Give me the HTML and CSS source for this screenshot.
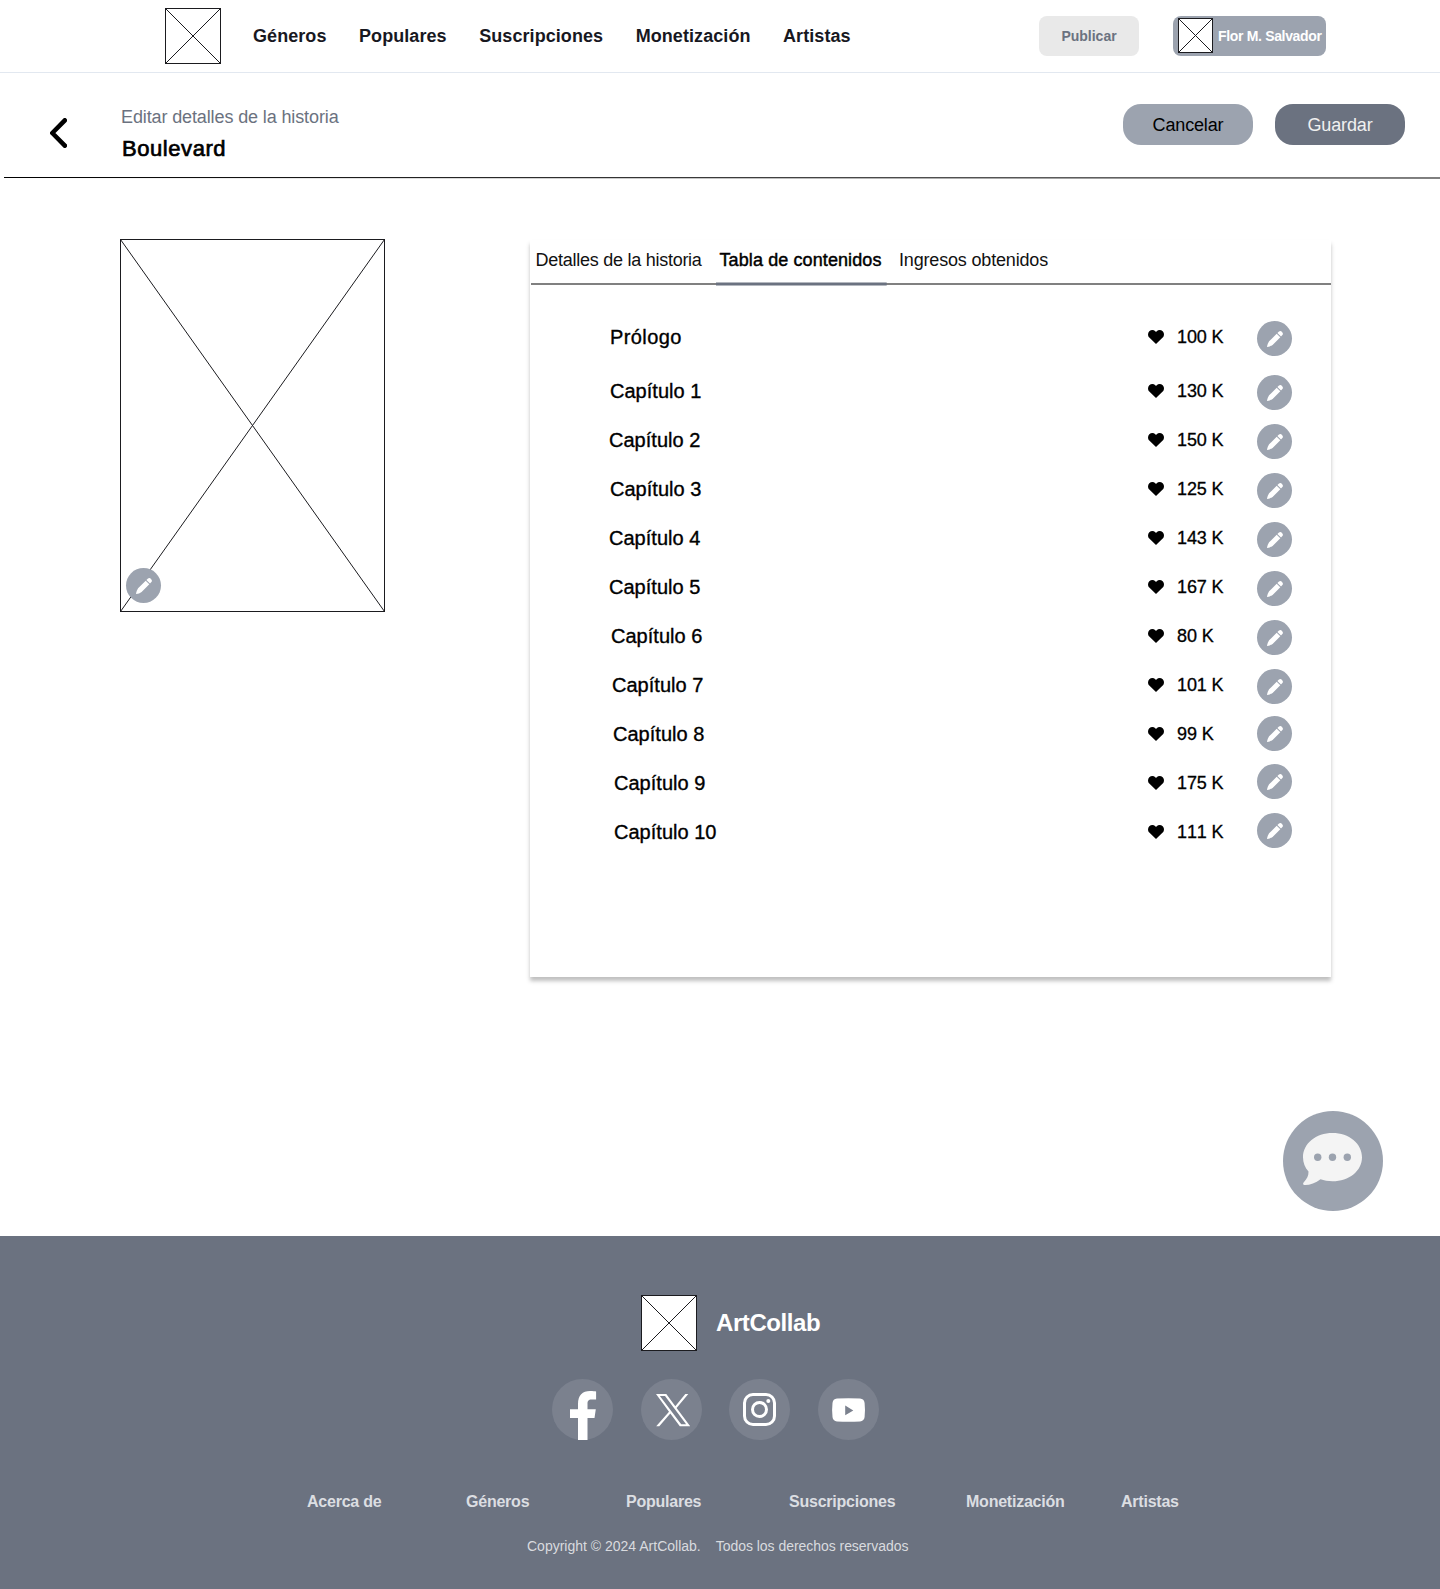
FILE: index.html
```html
<!DOCTYPE html>
<html lang="es">
<head>
<meta charset="utf-8">
<title>ArtCollab</title>
<link rel="stylesheet" href="styles.css">
</head>
<body>
<svg class="defs" width="0" height="0" aria-hidden="true">
  <symbol id="pencil" viewBox="0 0 16 16"><path d="M9.7 2.700 13.300 6.300 5.6 13.900C4 15 2 15.800.5 16 .1 16 0 15.800 0 15.500.4 13.800 1 12 2.100 10.300ZM10.400 2 12 .6C13-.200 14.100-.100 15 .9 16.100 2 16.200 3.100 15.400 4L14 5.600Z"/></symbol>
  <symbol id="heart" viewBox="0 0 16 14"><path d="M8 14 1.300 7.600C-.400 5.900-.400 3 1.300 1.300 3-.300 5.700-.300 7.300 1.200L8 1.900 8.700 1.200C10.300-.300 13-.300 14.700 1.300 16.400 3 16.400 5.900 14.700 7.600Z"/></symbol>
</svg>

<header class="topbar">
  <svg class="logo" viewBox="0 0 56 56"><rect x=".5" y=".5" width="55" height="55"/><path d="M.5.5 55.500 55.500M55.500.5.5 55.500"/></svg>
  <nav class="nav"><a>Géneros</a><a>Populares</a><a>Suscripciones</a><a>Monetización</a><a>Artistas</a></nav>
  <button class="publish">Publicar</button>
  <div class="user">
    <svg class="avatar" viewBox="0 0 35 35"><rect x=".5" y=".5" width="34" height="34"/><path d="M.5.5 34.500 34.500M34.500.5.5 34.500"/></svg>
    <span>Flor M. Salvador</span>
  </div>
</header>

<section class="subhead">
  <svg class="back" viewBox="0 0 17 30"><path d="M14.800 2.300 2.300 15 14.800 27.700"/></svg>
  <div class="titles"><p class="eyebrow">Editar detalles de la historia</p><h1>Boulevard</h1></div>
  <button class="pill cancel">Cancelar</button>
  <button class="pill save">Guardar</button>
</section>
<svg class="rule" viewBox="0 0 1440 2"><path d="M4 .5 1440 1"/></svg>

<main class="main">
  <div class="cover">
    <svg class="cover-art" viewBox="0 0 265 373"><rect x=".5" y=".5" width="264" height="372"/><path d="M.5.5 264.500 372.500M264.500.5.5 372.500"/></svg>
    <button class="edit cover-edit"><svg><use href="#pencil"/></svg></button>
  </div>
  <section class="panel">
    <div class="tabs"><a class="tab t1">Detalles de la historia</a><a class="tab t2">Tabla de contenidos</a><a class="tab t3">Ingresos obtenidos</a></div>
    <svg class="tabline" viewBox="0 0 801 4"><path class="base" d="M1 2H801"/><path class="active" d="M186 2H356.700"/></svg>
    <ul class="chapters">
      <li class="first"><span class="name">Prólogo</span><svg class="heart"><use href="#heart"/></svg><span class="likes">100 K</span><button class="edit"><svg><use href="#pencil"/></svg></button></li>
      <li><span class="name">Capítulo 1</span><svg class="heart"><use href="#heart"/></svg><span class="likes">130 K</span><button class="edit"><svg><use href="#pencil"/></svg></button></li>
      <li><span class="name out">Capítulo 2</span><svg class="heart"><use href="#heart"/></svg><span class="likes">150 K</span><button class="edit"><svg><use href="#pencil"/></svg></button></li>
      <li><span class="name">Capítulo 3</span><svg class="heart"><use href="#heart"/></svg><span class="likes">125 K</span><button class="edit"><svg><use href="#pencil"/></svg></button></li>
      <li><span class="name out">Capítulo 4</span><svg class="heart"><use href="#heart"/></svg><span class="likes">143 K</span><button class="edit"><svg><use href="#pencil"/></svg></button></li>
      <li><span class="name out">Capítulo 5</span><svg class="heart"><use href="#heart"/></svg><span class="likes">167 K</span><button class="edit"><svg><use href="#pencil"/></svg></button></li>
      <li><span class="name in1">Capítulo 6</span><svg class="heart"><use href="#heart"/></svg><span class="likes">80 K</span><button class="edit"><svg><use href="#pencil"/></svg></button></li>
      <li><span class="name in2">Capítulo 7</span><svg class="heart"><use href="#heart"/></svg><span class="likes">101 K</span><button class="edit"><svg><use href="#pencil"/></svg></button></li>
      <li><span class="name in3">Capítulo 8</span><svg class="heart"><use href="#heart"/></svg><span class="likes">99 K</span><button class="edit up2"><svg><use href="#pencil"/></svg></button></li>
      <li><span class="name in4">Capítulo 9</span><svg class="heart"><use href="#heart"/></svg><span class="likes">175 K</span><button class="edit up3"><svg><use href="#pencil"/></svg></button></li>
      <li><span class="name in4">Capítulo 10</span><svg class="heart"><use href="#heart"/></svg><span class="likes">111 K</span><button class="edit up3"><svg><use href="#pencil"/></svg></button></li>
    </ul>
  </section>
</main>

<button class="chat"><svg viewBox="0 0 59 52"><path d="M29.500 0C46 0 59 10.500 59 24.200S46 48.200 29.500 48.200C25 48.200 21 47.500 17.500 46.200 12.500 50 6 52.400 1 52 0 51.500-.2 50.500.6 49.500 4 46 5.700 42.500 5.500 38.500 2 34.500 0 29.700 0 24.200 0 10.500 13 0 29.500 0Z"/><g class="dots"><circle cx="14.700" cy="24.200" r="3.700"/><circle cx="29.500" cy="24.200" r="3.700"/><circle cx="44.300" cy="24.200" r="3.700"/></g></svg></button>

<footer class="footer">
  <div class="brand">
    <svg class="logo" viewBox="0 0 56 56"><rect x=".5" y=".5" width="55" height="55"/><path d="M.5.5 55.500 55.500M55.500.5.5 55.500"/></svg>
    <span>ArtCollab</span>
  </div>
  <div class="social">
    <a><svg viewBox="0 0 61 61"><path d="M26 61V39H18V30.200H26V25C26 16.500 30.500 12.100 38 12.100 40.800 12.100 43.200 12.300 44.100 12.500V20.600H39.500C36.300 20.600 35.500 22.200 35.500 24.800V30.200H43.800L42.500 39H35.500V61Z"/></svg></a>
    <a><svg viewBox="0 0 61 61"><path fill-rule="evenodd" d="M15 15H25.300L34.300 27.200 44.300 15H47.300L35.600 28.900 49.200 47.300H38.800L29.300 34.600 18.300 47.300H15.200L28 32.800ZM18.900 17 40.200 45.300H45.100L24 17Z"/></svg></a>
    <a><svg viewBox="0 0 61 61"><g class="line"><rect x="15.500" y="15.500" width="30" height="30" rx="8.500"/><circle cx="30.500" cy="30.500" r="7"/></g><circle cx="39.300" cy="21.900" r="2"/></svg></a>
    <a><svg viewBox="0 0 61 61"><path fill-rule="evenodd" d="M19 19.600Q30.500 18.800 42 19.600 46.200 20 46.600 24 47.400 31 46.600 38 46.200 42 42 42.400 30.500 43.200 19 42.400 14.900 42 14.500 38 13.700 31 14.500 24 14.900 20 19 19.600ZM27.200 26.500V36.200L35.300 31.400Z"/></svg></a>
  </div>
  <nav class="links"><a>Acerca de</a><a>Géneros</a><a>Populares</a><a>Suscripciones</a><a>Monetización</a><a>Artistas</a></nav>
  <div class="legal"><span>Copyright © 2024 ArtCollab.</span><span class="rights">Todos los derechos reservados</span></div>
</footer>
</body>
</html>
```
FILE: styles.css
```css
* { box-sizing: border-box; }
body {
  margin: 0;
  height: 1589px;
  display: flex;
  flex-direction: column;
  position: relative;
  background: #fff;
  color: #000;
  font-family: "Liberation Sans", Arial, sans-serif;
}
button { border: 0; padding: 0; font: inherit; color: inherit; }
svg { display: block; flex: none; }
p, h1, ul { margin: 0; padding: 0; }
.defs { position: absolute; }

.logo { width: 56px; height: 56px; }
.logo, .avatar, .cover-art { fill: #fff; stroke: #1b1b1f; stroke-width: 1; }

/* Top bar */
.topbar {
  height: 73px;
  flex: none;
  display: flex;
  align-items: center;
  padding-left: 165px;
  border-bottom: 1px solid #e2e8f0;
}
.nav {
  display: flex;
  gap: 32.500px;
  width: 786px;
  margin-left: 32px;
  flex: none;
  font-weight: 700;
  font-size: 18px;
  line-height: 24px;
  letter-spacing: .07px;
  color: #18181f;
}
.publish {
  width: 100px;
  height: 40px;
  border-radius: 8px;
  background: #e9e9e9;
  color: #6b7280;
  font-size: 14px;
  font-weight: 700;
}
.user {
  width: 153px;
  height: 40px;
  margin-left: 34px;
  padding: 2px 0 0 5px;
  display: flex;
  border-radius: 8px;
  background: #9ca3af;
  color: #fff;
  font-size: 14px;
  font-weight: 700;
  line-height: 36px;
  letter-spacing: -.33px;
  white-space: nowrap;
}
.avatar { width: 35px; height: 35px; margin-right: 5px; }

/* Story heading */
.subhead {
  height: 104px;
  flex: none;
  display: flex;
  align-items: flex-start;
}
.back { width: 17px; height: 30px; margin: 45px 0 0 50px; fill: none; stroke: #000; stroke-width: 4.600; stroke-linecap: round; stroke-linejoin: round; }
.titles { width: 1002px; margin: 32px 0 0 54px; }
.eyebrow { font-size: 18px; line-height: 24px; letter-spacing: -.12px; color: #6b7280; }
h1 { margin: 6px 0 0 1px; font-size: 22px; line-height: 28px; font-weight: 400; letter-spacing: .56px; -webkit-text-stroke: .7px #000; }
.pill {
  width: 130px;
  height: 41px;
  margin-top: 31px;
  padding-top: 2px;
  border-radius: 18px;
  font-size: 18px;
  letter-spacing: -.14px;
}
.cancel { background: #9ca3af; }
.save { margin-left: 22px; background: #6b7280; color: #f0f0f0; }
.rule { width: 1440px; height: 2px; fill: none; stroke: #000; }

/* Editor */
.main { display: flex; align-items: flex-start; padding: 60px 0 0 120px; }
.cover { position: relative; width: 265px; height: 373px; }
.cover-art { width: 265px; height: 373px; }
.edit {
  display: flex;
  align-items: flex-start;
  width: 35px;
  height: 35px;
  padding: 10px 0 0 10px;
  border-radius: 50%;
  background: #9ca3af;
  fill: #fff;
}
.edit svg { width: 16px; height: 16px; }
.cover-edit { position: absolute; left: 6px; top: 329px; }
.panel {
  width: 801px;
  height: 737px;
  margin: 1px 0 0 145px;
  background: #fff;
  box-shadow: 0 4px 4px rgba(0, 0, 0, .25);
}
.tabs { display: flex; height: 42px; padding: 8px 0 0 5.500px; font-size: 18px; line-height: 24px; white-space: nowrap; color: #111; }
.t1 { width: 184px; letter-spacing: -.26px; }
.t2 { width: 179.500px; letter-spacing: .1px; -webkit-text-stroke: .45px #000; color: #000; }
.t3 { letter-spacing: -.17px; }
.tabline { width: 801px; height: 4px; fill: none; }
.base { stroke: #808080; stroke-width: 2; }
.active { stroke: #6b7280; stroke-width: 3; }
.chapters { list-style: none; padding-top: 28px; }
.chapters li {
  height: 49px;
  display: grid;
  grid-template-columns: 539px 29px 80px 35px;
  align-items: start;
  padding-left: 79px;
}
.chapters .first { height: 54px; }
.name { padding-left: 1px; margin-top: 11px; font-size: 20px; line-height: 24px; letter-spacing: .02px; -webkit-text-stroke: .35px #000; }
.first .name { letter-spacing: .4px; }
.name.out { padding-left: 0; }
.name.in1 { padding-left: 2px; }
.name.in2 { padding-left: 3px; }
.name.in3 { padding-left: 4px; }
.name.in4 { padding-left: 5px; }
.heart { width: 16px; height: 14px; margin-top: 16px; }
.likes { margin-top: 11px; font-size: 18px; line-height: 24px; letter-spacing: -.12px; font-kerning: none; -webkit-text-stroke: .3px #000; }
.chapters .edit { margin-top: 7px; }
.chapters .up2 { margin-top: 5px; }
.chapters .up3 { margin-top: 4px; }

.chat {
  position: absolute;
  left: 1283px;
  top: 1111px;
  width: 100px;
  height: 100px;
  padding: 22px 0 0 20px;
  display: flex;
  align-items: flex-start;
  border-radius: 50%;
  background: #9ca3af;
}
.chat svg { width: 59px; height: 52px; fill: #f4f4f4; overflow: visible; }
.chat .dots { fill: #9ca3af; }

/* Footer */
.footer { height: 353px; flex: none; margin-top: auto; padding-top: 59px; background: #6b7280; }
.brand { display: flex; align-items: center; padding-left: 641px; color: #fff; font-size: 24px; line-height: 28px; font-weight: 700; letter-spacing: -.42px; }
.brand span { margin-left: 19px; }
.social { display: grid; grid-template-columns: 89px 88px 89px 61px; padding: 28px 0 0 552px; }
.social a { width: 61px; height: 61px; border-radius: 50%; background: #7b818e; fill: #fff; }
.line { fill: none; stroke: #fff; stroke-width: 3; }
.links {
  display: grid;
  grid-template-columns: 159px 160px 163px 177px 155px auto;
  padding: 50px 0 0 307px;
  font-size: 16px;
  line-height: 24px;
  font-weight: 700;
  letter-spacing: -.23px;
  color: #dcdee2;
}
.legal { display: flex; padding: 22px 0 0 527px; font-size: 14px; line-height: 20px; color: #d9dbdf; white-space: nowrap; }
.rights { margin-left: 15px; letter-spacing: -.04px; }
```
